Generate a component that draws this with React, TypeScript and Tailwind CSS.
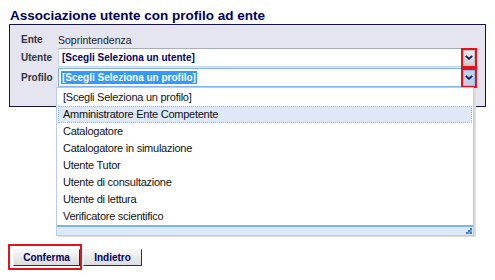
import React from "react";

const profili = [
  "[Scegli Seleziona un profilo]",
  "Amministratore Ente Competente",
  "Catalogatore",
  "Catalogatore in simulazione",
  "Utente Tutor",
  "Utente di consultazione",
  "Utente di lettura",
  "Verificatore scientifico",
];

function Chevron() {
  return (
    <svg width="8" height="5" viewBox="0 0 8 5" className="block">
      <path d="M0.8 0.8 L4 3.8 L7.2 0.8" fill="none" stroke="#10145a" strokeWidth="1.8" />
    </svg>
  );
}

function ArrowButton({ focused }: { focused?: boolean }) {
  return (
    <div className="relative h-[16px] w-[12px]">
      <div
        className={
          focused
            ? "flex h-full w-full items-center justify-center border border-[#98bce6] bg-[#bcd3ee]"
            : "flex h-full w-full items-center justify-center border border-[#c4c4c4] bg-gradient-to-b from-[#ececec] to-[#cfcfcf]"
        }
      >
        <Chevron />
      </div>
      <span className="pointer-events-none absolute -left-[2px] -right-[2px] -top-[2px] -bottom-[2px] border-2 border-[#e3121b]" />
    </div>
  );
}

export default function App() {
  return (
    <div className="relative h-[280px] w-[495px] overflow-hidden bg-white font-['Liberation_Sans',Arial,sans-serif]">
      <h1 className="px-[10px] pt-[7px] text-[13.5px] font-bold leading-[17px] text-[#000060]">
        Associazione utente con profilo ad ente
      </h1>

      <div className="mx-[9px] h-[83px] border border-[#14144a] bg-[#e5e5ef] pl-[11px] pr-[9px] pt-[9px]">
        <div className="grid grid-cols-[37px_1fr] items-center">
          <span className="h-[12px] text-[10px] font-bold leading-[12px] text-[#333340]">Ente</span>
          <span className="h-[12px] text-[10.5px] leading-[12px] text-[#1a1a2a]">Soprintendenza</span>

          <span className="mt-[2px] text-[10px] font-bold leading-[19px] text-[#333340]">Utente</span>
          <div className="mt-[2px] flex h-[19px] items-center justify-between border border-[#c2d6ee] border-t-[#a8aeb8] bg-white pl-[3px] pr-0">
            <span className="text-[10px] font-bold text-[#000060]">[Scegli Seleziona un utente]</span>
            <ArrowButton />
          </div>

          <span className="mt-[1px] text-[10px] font-bold leading-[19px] text-[#333340]">Profilo</span>
          <div className="relative mt-[1px] flex h-[19px] items-center justify-between border border-[#7fb4ea] bg-white pl-[2px] pr-0">
            <span className="bg-[#3399ff] px-[1px] text-[10px] font-bold leading-[13px] text-white">
              [Scegli Seleziona un profilo]
            </span>
            <ArrowButton focused />

            <div className="absolute -left-[3px] right-[1px] top-[18px] z-10 border border-[#b9cde6] bg-white shadow-[2px_1px_0_#dcdcdc]">
              <div className="px-[1px] pt-[1px]">
                {profili.map((p, i) => (
                  <div
                    key={p}
                    className={
                      i === 1
                        ? "h-[17px] border border-dotted border-[#93b6e6] bg-[#dfe8f6] pl-[4px] text-[11px] leading-[15px] tracking-[-0.25px] text-[#111]"
                        : "h-[17px] pl-[5px] text-[11px] leading-[17px] tracking-[-0.25px] text-[#111]"
                    }
                  >
                    {p}
                  </div>
                ))}
              </div>
              <div className="relative h-[10px] border-t-2 border-[#7db2ea] bg-[#dce9fa]">
                <svg width="6" height="6" viewBox="0 0 6 6" className="absolute bottom-[1px] right-[1px]">
                  <rect x="4" y="0" width="2" height="2" fill="#3a78d8" />
                  <rect x="2" y="2" width="2" height="2" fill="#3a78d8" />
                  <rect x="4" y="2" width="2" height="2" fill="#7aa8ea" />
                  <rect x="0" y="4" width="2" height="2" fill="#3a78d8" />
                  <rect x="2" y="4" width="2" height="2" fill="#7aa8ea" />
                  <rect x="4" y="4" width="2" height="2" fill="#3a78d8" />
                </svg>
              </div>
            </div>
          </div>
        </div>
      </div>

      <div className="mt-[142px] flex gap-[3px] pl-[13px]">
        <button className="relative h-[17px] w-[67px] border border-[#f4f4f4] border-b-[#303030] border-r-[#303030] bg-gradient-to-b from-[#f7f7f7] to-[#dcdcdc] text-[10px] font-bold leading-[14px] text-[#000060]">
          Conferma
          <span className="pointer-events-none absolute -left-[6px] -right-[3px] -top-[6px] -bottom-[5px] border-2 border-[#e3121b]" />
        </button>
        <button className="h-[17px] w-[59px] border border-[#f4f4f4] border-b-[#303030] border-r-[#303030] bg-gradient-to-b from-[#f7f7f7] to-[#dcdcdc] text-[10px] font-bold leading-[14px] text-[#000060]">
          Indietro
        </button>
      </div>
    </div>
  );
}
